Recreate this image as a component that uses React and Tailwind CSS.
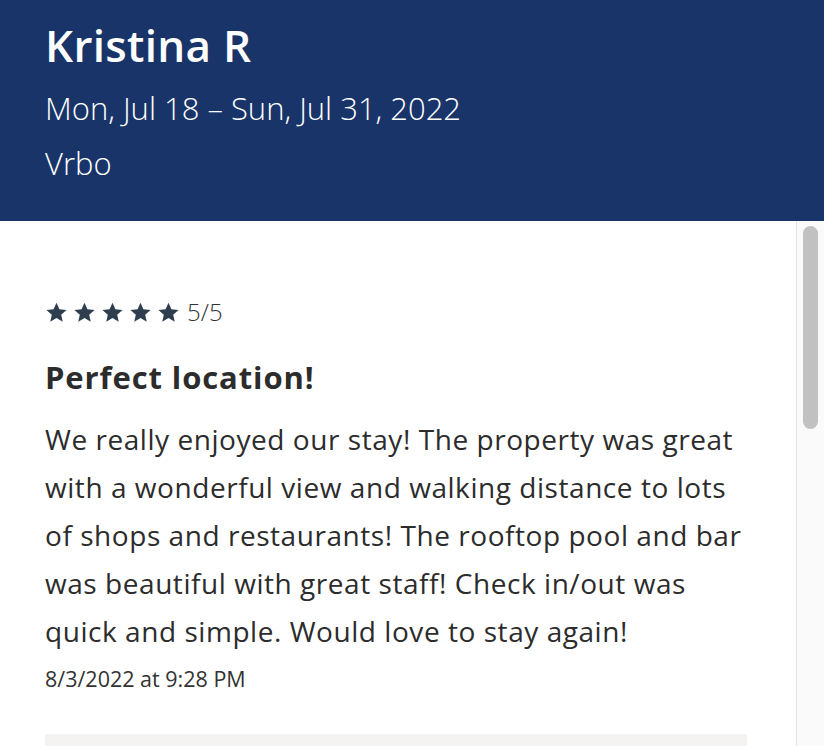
import React from 'react';

const font = { fontFamily: '"Open Sans", "Lato", sans-serif' };

function Star() {
  return (
    <svg viewBox="0 0 24 24" className="w-[23px] h-[23px] fill-[#2f3e4f]">
      <path d="M12 1.8l3.05 6.85 7.45.7-5.62 4.95 1.66 7.3L12 17.8l-6.54 3.8 1.66-7.3L1.5 9.35l7.45-.7z" />
    </svg>
  );
}

function App() {
  return (
    <div className="w-[824px] h-[746px] overflow-hidden bg-white flex flex-col" style={font}>
      <header className="h-[221px] bg-[#193469] text-white px-[45px] pt-[19px] shrink-0">
        <h1 className="text-[44px] font-semibold tracking-[0.3px] leading-[52px]">Kristina R</h1>
        <p className="text-[31px] font-light leading-[40px] mt-[17px]">Mon, Jul 18 – Sun, Jul 31, 2022</p>
        <p className="text-[31px] font-light leading-[40px] mt-[15px]">Vrbo</p>
      </header>

      <div className="flex flex-1 min-h-0">
        <main className="flex-1 pl-[45px] pr-[40px] pt-[79px] text-[#2c2c2c]">
          <div className="flex items-center gap-[7px]">
            <div className="flex gap-[5px]">
              <Star />
              <Star />
              <Star />
              <Star />
              <Star />
            </div>
            <span className="text-[24px] font-light text-[#333] leading-none">5/5</span>
          </div>
          <h2 className="text-[31px] font-bold tracking-[0.9px] mt-[33px] leading-[40px]">Perfect location!</h2>
          <p className="text-[28px] tracking-[0.55px] leading-[48px] mt-[18px]">
            We really enjoyed our stay! The property was great with a wonderful view and walking distance to lots of shops and restaurants! The rooftop pool and bar was beautiful with great staff! Check in/out was quick and simple. Would love to stay again!
          </p>
          <p className="text-[21.5px] leading-[28px] text-[#333] mt-[10px]">8/3/2022 at 9:28 PM</p>
          <div className="mt-[41px] h-[40px] w-[702px] bg-[#f4f3f1]"></div>
        </main>

        <div className="w-[28px] shrink-0 border-l border-[#e3e3e3] bg-[#fafafa] pt-[5px] flex justify-center">
          <div className="w-[15px] h-[203px] rounded-full bg-[#c1c1c1]"></div>
        </div>
      </div>
    </div>
  );
}

export default App;
